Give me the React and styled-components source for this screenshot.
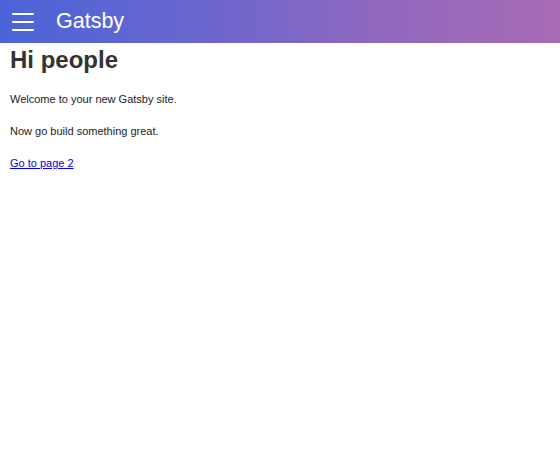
import React from 'react';
import styled, { createGlobalStyle } from 'styled-components';

const GlobalStyle = createGlobalStyle`
  html, body {
    margin: 0;
    padding: 0;
    background: #fff;
    font-family: "Liberation Sans", Arial, sans-serif;
  }
`;

const Header = styled.header`
  height: 43px;
  display: flex;
  align-items: center;
  padding: 0 12px;
  background: linear-gradient(90deg, #4a64d8 0%, #6a66cf 35%, #9268bd 70%, #a86bb7 100%);
  color: #fff;
`;

const MenuButton = styled.button`
  width: 22px;
  height: 18px;
  padding: 0;
  border: 0;
  background: none;
  display: flex;
  flex-direction: column;
  justify-content: space-between;
  cursor: pointer;

  span {
    display: block;
    height: 2px;
    background: #fff;
    border-radius: 1px;
  }
`;

const Brand = styled.a`
  margin-left: 22px;
  font-size: 21.5px;
  color: #fff;
  text-decoration: none;
`;

const Main = styled.main`
  padding: 0 10px;
  color: #222;
`;

const Title = styled.h1`
  margin: 2px 0 0;
  font-size: 24px;
  font-weight: bold;
  color: #333;
  line-height: 29px;
`;

const Text = styled.p`
  margin: 19px 0 0;
  font-size: 11px;
  line-height: 13px;
  color: #222;
`;

const PageLink = styled.a`
  color: #0000ee;
  text-decoration: underline;
`;

const App = () => {
  return (
    <>
      <GlobalStyle />
      <Header>
        <MenuButton aria-label="menu">
          <span />
          <span />
          <span />
        </MenuButton>
        <Brand href="#">Gatsby</Brand>
      </Header>
      <Main>
        <Title>Hi people</Title>
        <Text>Welcome to your new Gatsby site.</Text>
        <Text>Now go build something great.</Text>
        <Text>
          <PageLink href="#">Go to page 2</PageLink>
        </Text>
      </Main>
    </>
  );
};

export default App;
